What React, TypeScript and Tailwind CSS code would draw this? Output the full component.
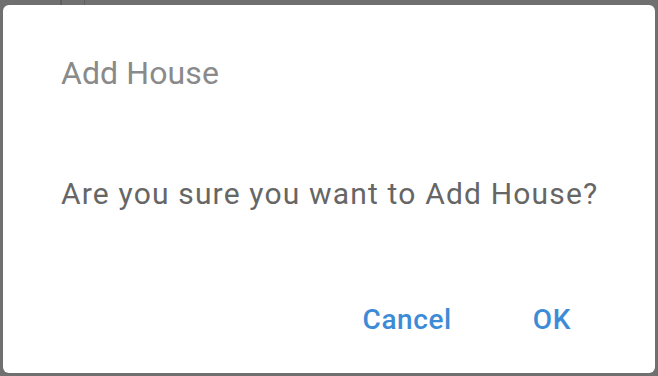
import React from "react";

export default function App() {
  return (
    <div className="relative w-[658px] h-[376px] bg-[#707070] overflow-hidden" style={{ fontFamily: "Roboto, 'Noto Sans', sans-serif" }}>
      <div className="absolute left-[60px] top-0 w-[2px] h-[5px] bg-[#5e5e5e]" />
      <div className="absolute left-[84px] top-0 w-[1px] h-[5px] bg-[#5e5e5e]" />
      <div className="ml-[3px] mt-[5px] w-[652px] h-[368px] bg-white rounded-[6px] flex flex-col pl-[58px] pt-[48px]">
        <div className="text-[32px] leading-[40px] text-[#8a8a8a] font-normal tracking-[0.1px]">Add House</div>
        <div className="mt-[83px] text-[30px] leading-[36px] text-[#666666] tracking-[1.17px]">Are you sure you want to Add House?</div>
        <div className="mt-[90px] flex justify-end pr-[84px] gap-[81px] text-[28px] leading-[36px] font-medium text-[#3d8bd7] tracking-[0.6px]">
          <span>Cancel</span>
          <span>OK</span>
        </div>
      </div>
    </div>
  );
}
